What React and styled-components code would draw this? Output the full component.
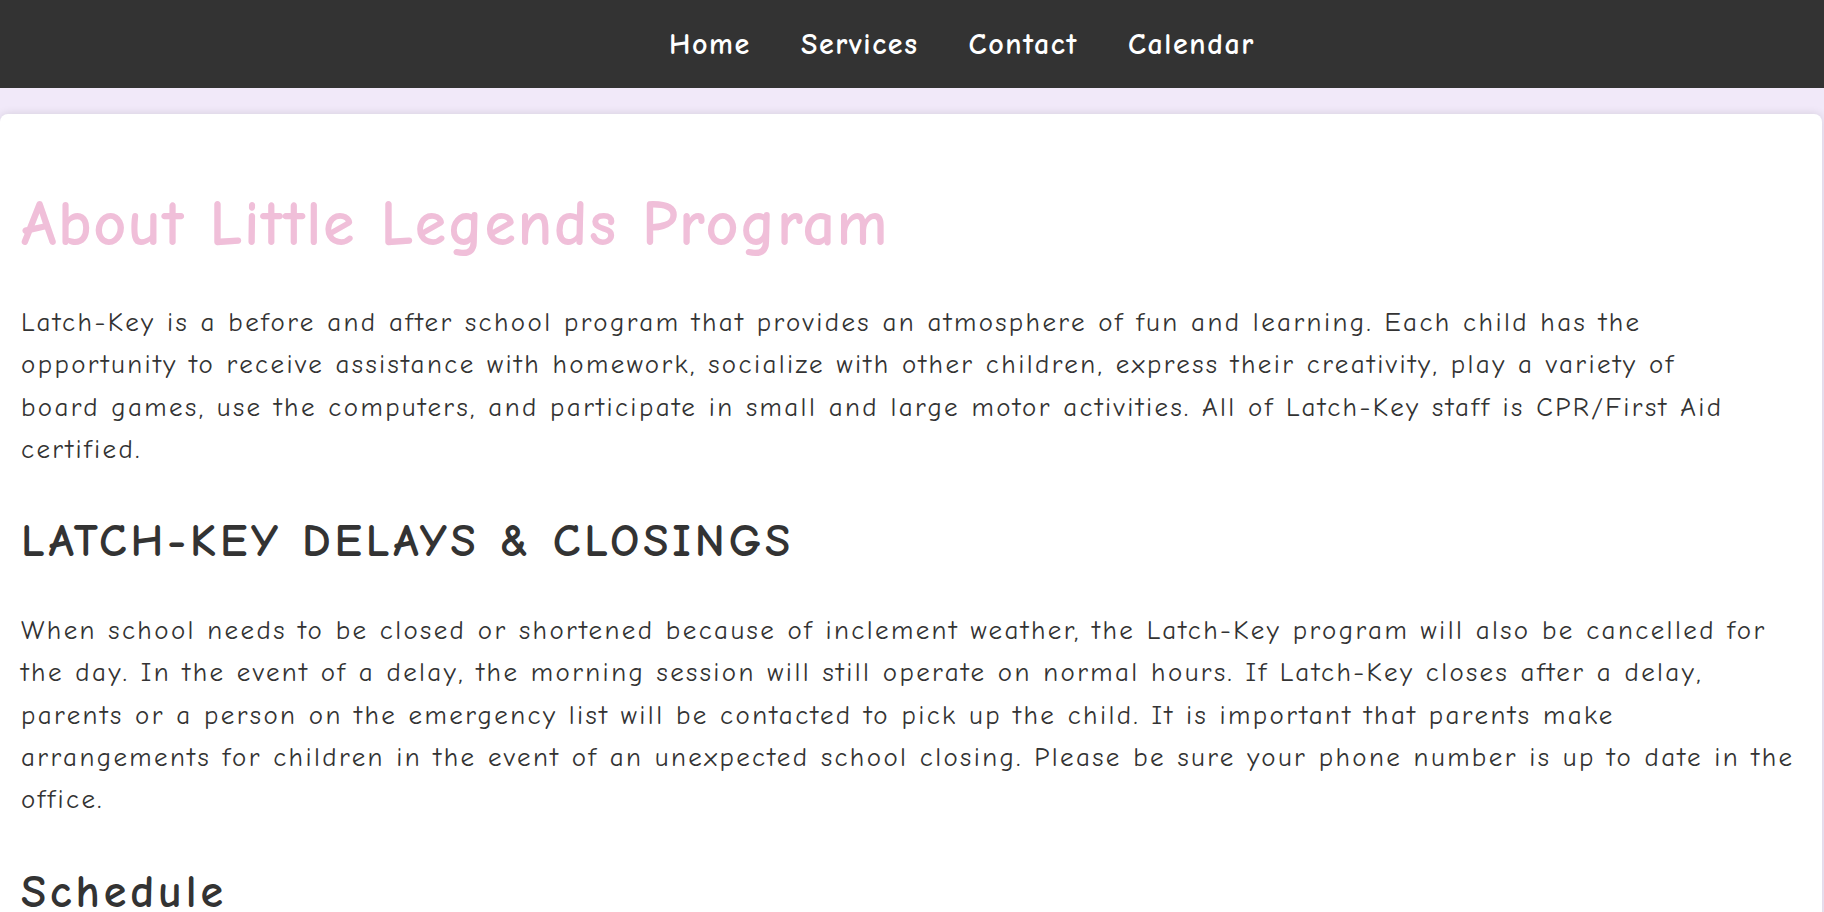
import styled, { createGlobalStyle } from "styled-components";

const GlobalStyle = createGlobalStyle`
  html, body {
    margin: 0;
    padding: 0;
  }
  body {
    background: #f1e9f9;
    font-family: "Comic Sans MS", "Comic Neue", "DejaVu Sans", sans-serif;
    color: #333333;
    overflow: hidden;
  }
`

const links = ["Home", "Services", "Contact", "Calendar"]

const about = [
    "Latch-Key is a before and after school program that provides an atmosphere of fun and learning. Each child has the",
    "opportunity to receive assistance with homework, socialize with other children, express their creativity, play a variety of",
    "board games, use the computers, and participate in small and large motor activities. All of Latch-Key staff is CPR/First Aid",
    "certified.",
]

const closings = [
    "When school needs to be closed or shortened because of inclement weather, the Latch-Key program will also be cancelled for",
    "the day. In the event of a delay, the morning session will still operate on normal hours. If Latch-Key closes after a delay,",
    "parents or a person on the emergency list will be contacted to pick up the child. It is important that parents make",
    "arrangements for children in the event of an unexpected school closing. Please be sure your phone number is up to date in the",
    "office.",
]

export default function App() {
    return (
        <>
            <GlobalStyle />
            <Nav>
                {links.map((l) => <NavLink key={l} href="#">{l}</NavLink>)}
            </Nav>
            <Card>
                <Title>About Little Legends Program</Title>
                <Text>
                    {about.map((line, i) => <Line key={i}>{line} </Line>)}
                </Text>
                <Heading>LATCH-KEY DELAYS &amp; CLOSINGS</Heading>
                <Text>
                    {closings.map((line, i) => <Line key={i}>{line} </Line>)}
                </Text>
                <Heading>Schedule</Heading>
            </Card>
        </>
    )
}

const Nav = styled.nav`
height: 88px;
background: #333333;
display: flex;
align-items: center;
justify-content: center;
gap: 50px;
padding-left: 100px;
box-sizing: border-box;
`

const NavLink = styled.a`
color: #ffffff;
text-decoration: none;
font-weight: bold;
font-size: 30px;
letter-spacing: 1.6px;
`

const Card = styled.main`
margin: 26px 2px 0 0;
background: #ffffff;
border-radius: 8px;
box-shadow: 0 0 10px rgba(0, 0, 0, 0.12);
padding: 73px 21px 40px;
min-height: 900px;
`

const Title = styled.h1`
margin: 0 0 41px;
font-size: 64px;
line-height: 74px;
letter-spacing: 1.6px;
color: #f0bfd9;
`

const Heading = styled.h2`
margin: 44px 0 42px;
font-size: 46px;
line-height: 53px;
letter-spacing: 3.9px;
color: #333333;
`

const Text = styled.p`
margin: 0;
font-size: 27px;
line-height: 42.3px;
letter-spacing: 2.4px;
`

const Line = styled.span`
display: block;
white-space: nowrap;
`
